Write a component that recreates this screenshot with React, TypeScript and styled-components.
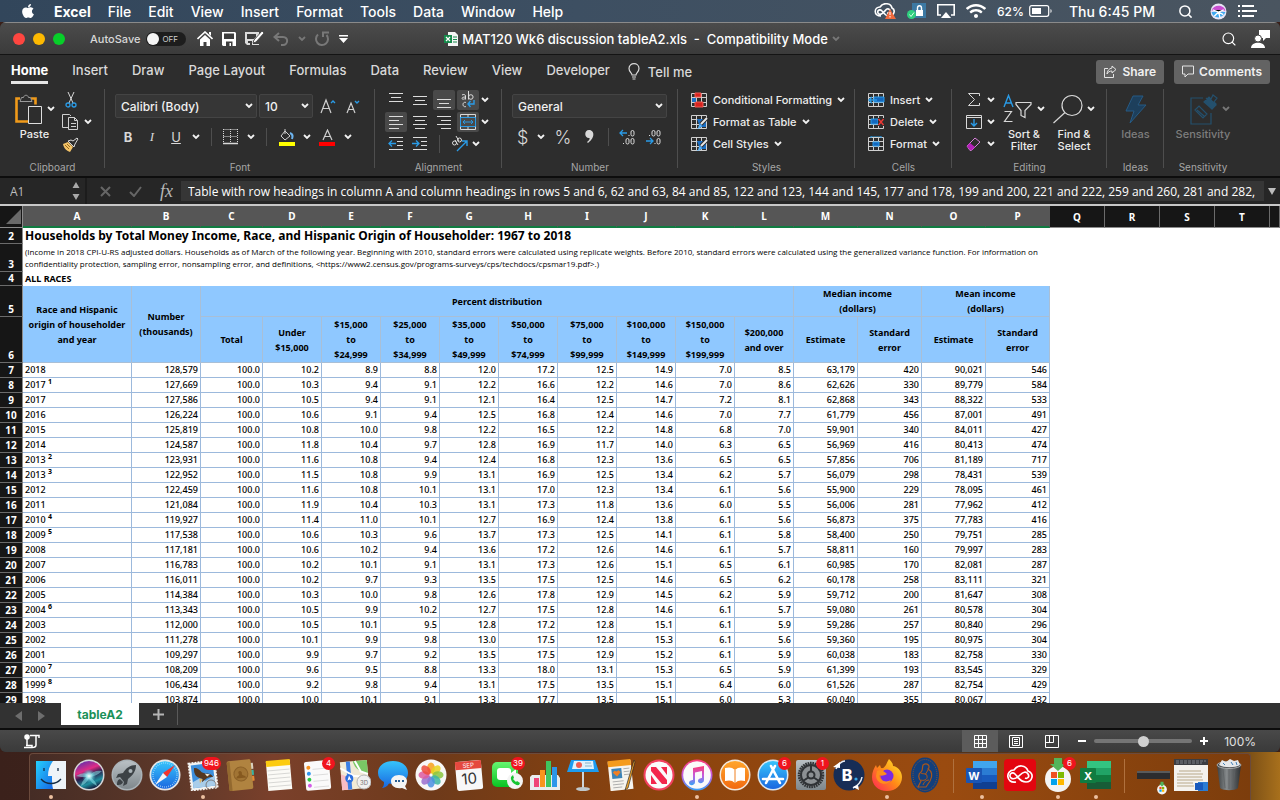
import styled, { createGlobalStyle, css } from "styled-components";
import { FaApple, FaWifi } from "react-icons/fa";
import { Search } from "lucide-react";
import type { ReactNode } from "react";

const ui = `Inter, "Liberation Sans", sans-serif`;
const cellFont = `"Noto Sans", "Open Sans", sans-serif`;
const lightCellFont = `"Open Sans", "Noto Sans", sans-serif`;

const menus = ["File", "Edit", "View", "Insert", "Format", "Tools", "Data", "Window", "Help"];
const tabs = ["Home", "Insert", "Draw", "Page Layout", "Formulas", "Data", "Review", "View", "Developer"];
const columns = "ABCDEFGHIJKLMNOPQRST".split("");

const bands = [
  ["$15,000", "$24,999"],
  ["$25,000", "$34,999"],
  ["$35,000", "$49,999"],
  ["$50,000", "$74,999"],
  ["$75,000", "$99,999"],
  ["$100,000", "$149,999"],
  ["$150,000", "$199,999"],
];

// year, footnote, number, total, ten bands, median + error, mean + error
const data = `2018||128,579|100.0|10.2|8.9|8.8|12.0|17.2|12.5|14.9|7.0|8.5|63,179|420|90,021|546
2017|1|127,669|100.0|10.3|9.4|9.1|12.2|16.6|12.2|14.6|7.0|8.6|62,626|330|89,779|584
2017||127,586|100.0|10.5|9.4|9.1|12.1|16.4|12.5|14.7|7.2|8.1|62,868|343|88,322|533
2016||126,224|100.0|10.6|9.1|9.4|12.5|16.8|12.4|14.6|7.0|7.7|61,779|456|87,001|491
2015||125,819|100.0|10.8|10.0|9.8|12.2|16.5|12.2|14.8|6.8|7.0|59,901|340|84,011|427
2014||124,587|100.0|11.8|10.4|9.7|12.8|16.9|11.7|14.0|6.3|6.5|56,969|416|80,413|474
2013|2|123,931|100.0|11.6|10.8|9.4|12.4|16.8|12.3|13.6|6.5|6.5|57,856|706|81,189|717
2013|3|122,952|100.0|11.5|10.8|9.9|13.1|16.9|12.5|13.4|6.2|5.7|56,079|298|78,431|539
2012||122,459|100.0|11.6|10.8|10.1|13.1|17.0|12.3|13.4|6.1|5.6|55,900|229|78,095|461
2011||121,084|100.0|11.9|10.4|10.3|13.1|17.3|11.8|13.6|6.0|5.5|56,006|281|77,962|412
2010|4|119,927|100.0|11.4|11.0|10.1|12.7|16.9|12.4|13.8|6.1|5.6|56,873|375|77,783|416
2009|5|117,538|100.0|10.6|10.3|9.6|13.7|17.3|12.5|14.1|6.1|5.8|58,400|250|79,751|285
2008||117,181|100.0|10.6|10.2|9.4|13.6|17.2|12.6|14.6|6.1|5.7|58,811|160|79,997|283
2007||116,783|100.0|10.2|10.1|9.1|13.1|17.3|12.6|15.1|6.5|6.1|60,985|170|82,081|287
2006||116,011|100.0|10.2|9.7|9.3|13.5|17.5|12.5|14.6|6.5|6.2|60,178|258|83,111|321
2005||114,384|100.0|10.3|10.0|9.8|12.6|17.8|12.9|14.5|6.2|5.9|59,712|200|81,647|308
2004|6|113,343|100.0|10.5|9.9|10.2|12.7|17.5|12.8|14.6|6.1|5.7|59,080|261|80,578|304
2003||112,000|100.0|10.5|10.1|9.5|12.8|17.2|12.8|15.1|6.1|5.9|59,286|257|80,840|296
2002||111,278|100.0|10.1|9.9|9.8|13.0|17.5|12.8|15.3|6.1|5.6|59,360|195|80,975|304
2001||109,297|100.0|9.9|9.7|9.2|13.5|17.5|12.9|15.2|6.1|5.9|60,038|183|82,758|330
2000|7|108,209|100.0|9.6|9.5|8.8|13.3|18.0|13.1|15.3|6.5|5.9|61,399|193|83,545|329
1999|8|106,434|100.0|9.2|9.8|9.4|13.1|17.5|13.5|15.1|6.4|6.0|61,526|287|82,754|429
1998||103,874|100.0|10.0|10.1|9.1|13.3|17.7|13.5|15.1|6.0|5.3|60,040|355|80,067|432`
  .split("\n")
  .map((line) => line.split("|"));

const Chevron = ({ dim }: { dim?: boolean }) => (
  <svg width="8" height="6" viewBox="0 0 8 6" fill="none" stroke={dim ? "#777" : "#f2f2f2"} strokeWidth="1.8">
    <path d="M1 1l3 3 3-3" />
  </svg>
);

type AlignKind = "top" | "middle" | "bottom" | "left" | "center" | "right";
const alignLines: Record<AlignKind, [number, number, number][]> = {
  top: [[1, 1, 14], [3, 5, 10], [1, 9, 14]],
  middle: [[1, 4, 14], [3, 8, 10], [1, 12, 14]],
  bottom: [[1, 7, 14], [3, 11, 10], [1, 15, 14]],
  left: [[1, 2, 14], [1, 6, 10], [1, 10, 14], [1, 14, 10]],
  center: [[1, 2, 14], [3, 6, 10], [1, 10, 14], [3, 14, 10]],
  right: [[1, 2, 14], [5, 6, 10], [1, 10, 14], [5, 14, 10]],
};
const AlignIcon = ({ kind }: { kind: AlignKind }) => (
  <svg width="16" height="17" viewBox="0 0 16 17" fill="#dcdcdc">
    {alignLines[kind].map(([x, y, w]) => (
      <rect key={y} x={x} y={y} width={w} height="1" />
    ))}
  </svg>
);

const IndentIcon = ({ out }: { out?: boolean }) => (
  <svg width="16" height="16" viewBox="0 0 16 16" fill="none" stroke="#dcdcdc">
    <path d="M1 1.5h14M9 5.5h6M9 9.5h6M1 13.5h14" />
    <path d={out ? "M8 7.5H1M4 4.5l-3 3 3 3" : "M0 7.5h7M4 4.5l3 3-3 3"} stroke="#2a9be6" strokeWidth="1.3" />
  </svg>
);

const GridIcon = ({ children }: { children?: ReactNode }) => (
  <svg width="17" height="16" viewBox="0 0 17 16" fill="none" stroke="#d0d0d0">
    <path d="M.5 1.5h15v13H.5zM.5 5.5h15M.5 10.5h15M5.5 1.5v13M10.5 1.5v13" />
    {children}
  </svg>
);

const BrushOver = () => (
  <>
    <path d="M6 5h9v8H9z" fill="#1b6fc4" stroke="none" />
    <path d="M16 4l-6 6" stroke="#2e2e2e" strokeWidth="4" />
    <path d="M16 4l-6 6" stroke="#e8e8e8" strokeWidth="2" />
    <path d="M5 15c3 0 2-4 4-5l2 2c-1 2-3 3-6 3z" fill="#5cb3f5" stroke="none" />
  </>
);

const PasteIcon = () => (
  <svg width="29" height="31" viewBox="0 0 29 31" fill="none">
    <path d="M6 4.500H2.500v23H14M17 4.500h4.500v6" stroke="#f09a1a" strokeWidth="2.600" />
    <path d="M7.500 3.500h2c.5-3 4.500-3 5 0h2l1.500 4H6z" stroke="#9a9a9a" fill="#2d2d2d" />
    <path d="M14.500 12.500h13v17h-13z" stroke="#dedede" fill="#2d2d2d" />
  </svg>
);

const CutIcon = () => (
  <svg width="12" height="16" viewBox="0 0 12 16" fill="none">
    <path d="M3 0l5 11M9 0L4 11" stroke="#d8d8d8" />
    <circle cx="3" cy="13" r="2" stroke="#2a9be6" strokeWidth="1.300" />
    <circle cx="9" cy="13" r="2" stroke="#2a9be6" strokeWidth="1.300" />
  </svg>
);

const CopyIcon = () => (
  <svg width="17" height="16" viewBox="0 0 17 16" fill="none" stroke="#d0d0d0">
    <path d="M6 13.500H.5V.5h7L9 2" />
    <path d="M6.500 3.500h6l3 3v9h-9zM12.500 3.500v3h3M9 9.500h5M9 12.500h5" />
  </svg>
);

const PainterIcon = () => (
  <svg width="17" height="15" viewBox="0 0 17 15">
    <path d="M1 7l5-2 5 5-3 5C5 14 2 12 1 7z" fill="#f3c267" />
    <path d="M3 8l4 4M5 7l3 3" stroke="#96691b" />
    <path d="M6 4l6 6 1-3 3-5-1-1-4 3-2-1z" fill="#2d2d2d" stroke="#d8d8d8" />
  </svg>
);

const FontSizeIcon = ({ down }: { down?: boolean }) => (
  <svg width="17" height="16" viewBox="0 0 17 16" fill="none">
    <path d={down ? "M1 15L5 5l4 10M2.500 11.500h5" : "M1 15L6 2l5 13M3 10.500h6"} stroke="#cfcfcf" strokeWidth="1.200" />
    <path d={down ? "M9 3l2 2 2-2" : "M11 5l2-2 2 2"} stroke="#2a9be6" strokeWidth="1.400" />
  </svg>
);

const BordersIcon = () => (
  <svg width="16" height="16" viewBox="0 0 16 16" stroke="#d8d8d8" fill="none">
    <path d="M.5.5h14M.5 7.500h14M.5 0v14M7.500 0v14M14.500 0v14" strokeDasharray="1 1" />
    <path d="M0 14.500h15" strokeWidth="1.400" />
  </svg>
);

const FillIcon = () => (
  <svg width="17" height="17" viewBox="0 0 17 17" fill="none">
    <path d="M7 2l5 5-5 4-4-4zM7 0v5" stroke="#cfcfcf" />
    <path d="M12 4c3 1 3 3 2 6" stroke="#6db4ef" strokeWidth="2" />
    <path d="M1 13h16v4H1z" fill="#ff0" />
  </svg>
);

const FontColorIcon = () => (
  <svg width="17" height="17" viewBox="0 0 17 17" fill="none">
    <path d="M4 11L8.500 1 13 11M5.500 7.500h6" stroke="#cfcfcf" strokeWidth="1.200" />
    <path d="M0 13h16v4H0z" fill="#f00" />
  </svg>
);

const WrapIcon = () => (
  <svg width="16" height="18" viewBox="0 0 16 18" fill="none" stroke="#dcdcdc">
    <path d="M2 4c1.500-1 3.500-.5 3.500 1v3.500M5.500 6C3 6 2 6.500 2 7.500s2.500 1 3.500-.5" />
    <path d="M8.500 0v8.500" />
    <circle cx="10.800" cy="6" r="2.300" />
    <path d="M6 11.500c-4-1.500-4 5.500 0 4" />
    <path d="M14 9v4H8M10.500 10L8 13l2.500 3" stroke="#2a9be6" strokeWidth="1.400" />
  </svg>
);

const MergeIcon = () => (
  <svg width="16" height="16" viewBox="0 0 16 16" fill="none" stroke="#d8d8d8">
    <path d="M.5.5h15v15H.5zM8 0v4M8 12v4" />
    <path d="M.5 3.500h15v9H.5z" stroke="#2a9be6" />
    <path d="M3 8h10M5 6L3 8l2 2M11 6l2 2-2 2" stroke="#2a9be6" />
  </svg>
);

const OrientationIcon = () => (
  <svg width="17" height="16" viewBox="0 0 17 16" fill="none" stroke="#dcdcdc">
    <circle cx="3.500" cy="7" r="2" />
    <circle cx="8.500" cy="4" r="2" />
    <path d="M4 4l3 5M5 0l3 5" />
    <path d="M6 15L16 5M11 5h5v5" stroke="#2a9be6" strokeWidth="1.400" />
  </svg>
);

const DecimalIcon = ({ more }: { more?: boolean }) => (
  <svg width="17" height="17" viewBox="0 0 17 17" fill="none" stroke="#dcdcdc">
    <rect x="12" y="1.500" width="3" height="5.500" rx="1.500" />
    <rect x="12" y="9.500" width="3" height="5.500" rx="1.500" />
    {more ? (
      <>
        <path d="M8 4H1M4 1L1 4l3 3" stroke="#2a9be6" strokeWidth="1.300" />
        <rect x="7" y="9.500" width="3" height="5.500" rx="1.500" />
        <path d="M9.500 6.500h1M4 14.500h1" />
      </>
    ) : (
      <>
        <path d="M1 12h7M5 9l3 3-3 3" stroke="#2a9be6" strokeWidth="1.300" />
        <rect x="7" y="1.500" width="3" height="5.500" rx="1.500" />
        <path d="M4 6.500h1M9.500 14.500h1" />
      </>
    )}
  </svg>
);

const SumIcon = () => (
  <svg width="14" height="14" viewBox="0 0 14 14" fill="none" stroke="#d8d8d8">
    <path d="M12.500 3V.5h-11l6 6-6 6h11V10" />
  </svg>
);
const FillDownIcon = () => (
  <svg width="16" height="14" viewBox="0 0 16 14" fill="none" stroke="#d8d8d8">
    <path d="M.5.5h15v13H.5zM.5 2.500h15" />
    <path d="M8 4v7M5 8l3 3 3-3" stroke="#2a9be6" strokeWidth="1.400" />
  </svg>
);
const EraserIcon = () => (
  <svg width="16" height="14" viewBox="0 0 16 14" fill="none">
    <path d="M1 9l8-8 5 4-8 8-2 .5z" stroke="#d77fdb" />
    <path d="M1 9l3-3 5 4-3 3H4z" fill="#b31fb8" />
  </svg>
);
const SortIcon = () => (
  <svg width="30" height="30" viewBox="0 0 30 30" fill="none" strokeWidth="1.200">
    <path d="M1 13L5.500 1.500 10 13M2.500 9h6" stroke="#2a9be6" strokeWidth="1.400" />
    <path d="M1.500 17.500h7l-7 10h8" stroke="#d8d8d8" />
    <path d="M13 8.500h15v2l-6 6v7l-4-2v-5l-5-6z" stroke="#d8d8d8" />
  </svg>
);
const FindIcon = () => (
  <svg width="30" height="30" viewBox="0 0 30 30" fill="none" stroke="#d8d8d8" strokeWidth="1.200">
    <circle cx="19" cy="11.500" r="10" />
    <path d="M12 18.500L.5 29" />
  </svg>
);
const BoltIcon = () => (
  <svg width="23" height="29" viewBox="0 0 23 29">
    <path d="M9 1h10l-5 9h8L6 28l4-12H2z" fill="#1d3f5c" stroke="#275b84" />
  </svg>
);
const SensitivityIcon = () => (
  <svg width="28" height="31" viewBox="0 0 28 31" fill="none" stroke="#24506d" strokeWidth="1.200">
    <path d="M13 4H1v26h20V19" />
    <path d="M16 4l8 8M5 16l4-4 8 8-4 4zM7 16l7 6M14 8l5-5 2 2 2-4 4 3-3 4 2 2-4 5z" />
    <path d="M15 8l4-4 7 7-4 4z" fill="#24506d" />
  </svg>
);

/* ---------- dock artwork, 32 x 32 each ---------- */

const Art = ({ children }: { children: ReactNode }) => (
  <svg width="32" height="32" viewBox="0 0 32 32">
    {children}
  </svg>
);

const DockDefs = () => (
  <HiddenSvg width="0" height="0">
    <defs>
      <linearGradient id="siri" x1=".2" x2=".6" y2="1">
        <stop offset="0" stopColor="#5a2fae" />
        <stop offset=".35" stopColor="#e02c86" />
        <stop offset=".55" stopColor="#2a1d4a" />
        <stop offset=".8" stopColor="#1f8f9e" />
        <stop offset="1" stopColor="#141b3c" />
      </linearGradient>
      <radialGradient id="glow">
        <stop offset="0" stopColor="#fff" />
        <stop offset=".4" stopColor="#9ff1f5" stopOpacity=".8" />
        <stop offset="1" stopColor="#35c3d5" stopOpacity="0" />
      </radialGradient>
      <linearGradient id="safari" x2="0" y2="1">
        <stop offset="0" stopColor="#36c4fb" />
        <stop offset="1" stopColor="#1967e0" />
      </linearGradient>
      <linearGradient id="steel" x2="0" y2="1">
        <stop offset="0" stopColor="#b9c0c4" />
        <stop offset="1" stopColor="#7f888d" />
      </linearGradient>
      <linearGradient id="green" x2="0" y2="1">
        <stop offset="0" stopColor="#66f570" />
        <stop offset="1" stopColor="#09c322" />
      </linearGradient>
      <linearGradient id="orange" x2="0" y2="1">
        <stop offset="0" stopColor="#ffa52b" />
        <stop offset="1" stopColor="#f26a10" />
      </linearGradient>
      <linearGradient id="note" x2="0" y2="1">
        <stop offset="0" stopColor="#fb3a72" />
        <stop offset=".5" stopColor="#c45be0" />
        <stop offset="1" stopColor="#3aa2f5" />
      </linearGradient>
      <linearGradient id="fox" x1="1" x2="0" y2="1">
        <stop offset="0" stopColor="#fff02e" />
        <stop offset=".5" stopColor="#ff8a17" />
        <stop offset="1" stopColor="#ff1f5b" />
      </linearGradient>
      <linearGradient id="bin" x2="1">
        <stop offset="0" stopColor="#3c4042" />
        <stop offset=".4" stopColor="#85898b" />
        <stop offset="1" stopColor="#2e3133" />
      </linearGradient>
      <linearGradient id="finder" x1="0" x2="1" y2="1">
        <stop offset="0" stopColor="#25d0fd" />
        <stop offset="1" stopColor="#1667e6" />
      </linearGradient>
    </defs>
  </HiddenSvg>
);

const Finder = () => (
  <Art>
    <path d="M1 2h30v28H1z" fill="#eef3f8" />
    <path d="M1 2h17c-3 4-5 9-5 15h4c0 5 0 9 1 13H1z" fill="url(#finder)" />
    <path d="M9 9v3M23 9v3M6 20c5 6 15 6 20 0" stroke="#142c46" strokeWidth="1.300" fill="none" />
  </Art>
);
const Siri = () => (
  <Art>
    <circle cx="16" cy="16" r="15.500" fill="#d5d5d8" />
    <circle cx="16" cy="16" r="14" fill="url(#siri)" />
    <path d="M3 17c8-4 10-3 13 0 4-5 8-6 13-5-4 4-8 5-12 6 4 3 6 5 7 9-4-2-7-5-8-8-2 4-4 6-8 8 1-5 3-7 6-9-4 0-8 0-11-1z" fill="#8de4ea" opacity=".55" />
    <circle cx="16" cy="17" r="7" fill="url(#glow)" />
  </Art>
);
const Launchpad = () => (
  <Art>
    <circle cx="16" cy="16" r="15.500" fill="#aab3b8" />
    <circle cx="16" cy="16" r="14" fill="url(#steel)" />
    <path d="M25 6c-6 0-10 3-13 8l-5 1-2 4 4-1 4 5-1 4 4-2 1-5c5-4 8-8 8-14z" fill="#3c4246" />
    <circle cx="19.500" cy="12" r="2" fill="#aab3b8" />
    <path d="M9 20c-3 1-3 4-3 6 2 0 5 0 6-3" fill="#3c4246" />
  </Art>
);
const Safari = () => (
  <Art>
    <circle cx="16" cy="16" r="15.500" fill="#e6e6e6" />
    <circle cx="16" cy="16" r="13.800" fill="url(#safari)" />
    <circle cx="16" cy="16" r="12" fill="none" stroke="#bfe6ff" strokeDasharray=".6 1.500" strokeWidth="1.500" />
    <path d="M26 6L18 18l-4-4z" fill="#f2342e" />
    <path d="M6 26l8-12 4 4z" fill="#f5f5f5" />
  </Art>
);
const Mail = () => (
  <Art>
    <g transform="rotate(-7 16 16)">
      <rect x="3" y="3" width="26" height="27" fill="#f4f4f2" stroke="#f4f4f2" strokeDasharray="2 1" strokeWidth="2" />
      <rect x="5" y="5" width="22" height="23" fill="#3d8fdc" />
      <path d="M5 22l7-3 6 3 9-4v10H5z" fill="#a8cdea" />
      <path d="M8 8c3 0 5 2 7 5l4 2c3 0 5 1 7 4-3 0-5 0-7 1l-5 3 1-3-4-2c-3-2-4-6-3-10z" fill="#54371f" />
      <path d="M18 15l5 1-3 2z" fill="#f3ead6" />
      <path d="M12 19l3 1-3 4z" fill="#e2b25c" />
    </g>
    <circle cx="24" cy="26" r="5" fill="none" stroke="#5b4638" strokeWidth="1" opacity=".6" />
  </Art>
);
const Contacts = () => (
  <Art>
    <g transform="rotate(-6 16 16)">
      <path d="M26 5h3v6h-3z" fill="#d9d2c0" />
      <path d="M26 12h3v5h-3z" fill="#38b6a5" />
      <path d="M26 18h3v5h-3z" fill="#e78b35" />
      <rect x="3" y="1" width="24" height="30" rx="2" fill="#b08340" />
      <path d="M3 2h3v29H3z" fill="#93692f" />
      <circle cx="16" cy="15" r="7" fill="#a17434" stroke="#8c6128" />
      <path d="M11 19c1-3 3-2 3-4-2-4 4-4 3 0 0 2 3 1 4 4z" fill="#86591f" />
    </g>
  </Art>
);
const Notes = () => (
  <Art>
    <g transform="rotate(-5 16 16)">
      <rect x="4" y="2" width="24" height="29" fill="#fbfaf6" />
      <rect x="4" y="1" width="24" height="6" fill="#fccb10" />
      <path d="M5 11h22M5 15h22M5 19h22M5 23h22M5 27h22" stroke="#d0d0cd" strokeWidth=".8" />
    </g>
  </Art>
);
const Reminders = () => (
  <Art>
    <g transform="rotate(-5 16 16)">
      <rect x="4" y="2" width="25" height="29" rx="2" fill="#fafafa" />
      {["#f79321", "#2f95f1", "#2ccb45", "#d35ce8"].map((c, i) => (
        <circle key={c} cx="8" cy={8 + i * 6} r="2" fill={c} />
      ))}
      <path d="M12 10h15M12 16h15M12 22h15M12 28h15" stroke="#d6d6d6" strokeWidth=".8" />
    </g>
  </Art>
);
const Maps = () => (
  <Art>
    <g transform="rotate(-5 16 16)">
      <rect x="2" y="2" width="27" height="28" fill="#f1ead6" />
      <path d="M15 2h14v14c-8-2-13-7-14-14z" fill="#7ac765" />
      <path d="M2 14l10 5v11H2z" fill="#f8bdc4" />
      <path d="M10 2v28" stroke="#3a7fe5" strokeWidth="4" />
      <path d="M2 8l13 9 14 2M17 2l5 11 7 3" stroke="#fff" strokeWidth="2" fill="none" />
      <circle cx="10" cy="19" r="4" fill="#2a6fe0" />
      <path d="M10 16l2 5-2-1-2 1z" fill="#fff" />
    </g>
    <circle cx="25" cy="23" r="7" fill="#f0f0f0" stroke="#b5b5b5" />
    <text x="25" y="26" fontSize="6" textAnchor="middle" fill="#777" fontFamily="Inter">3D</text>
  </Art>
);
const Messages = () => (
  <Art>
    <path d="M16 2c9 0 15 5 15 12s-6 11-15 11l-4-.5C10 28 7 29 5 29c2-2 2-4 2-6-4-2-6-5-6-9C1 7 7 2 16 2z" fill="url(#safari)" />
    <path d="M22 16c5 0 8 3 8 6s-2 5-2 5l2 4-5-2c-7 1-11-2-11-7 0-3 3-6 8-6z" fill="#f5f5f5" />
    <path d="M18 22h2M21 22h2M25 22h2" stroke="#2b5f93" strokeWidth="2" />
  </Art>
);
const Photos = () => (
  <Art>
    <circle cx="16" cy="16" r="15.500" fill="#f7f7f7" />
    {["#f7a11b", "#e8d21c", "#8ac53f", "#3cb6a0", "#4a8fe0", "#9a6fd0", "#dd5aa0", "#ef4a3a"].map((c, i) => (
      <ellipse key={c} cx="16" cy="9" rx="3.800" ry="5.500" fill={c} opacity=".85" transform={`rotate(${i * 45} 16 16)`} />
    ))}
  </Art>
);
const Calendar = () => (
  <Art>
    <g transform="rotate(-5 16 16)">
      <rect x="3" y="2" width="26" height="29" rx="2" fill="#f8f8f8" />
      <rect x="3" y="2" width="26" height="8" fill="#e5483e" />
      <text x="16" y="8.500" fontSize="6" textAnchor="middle" fill="#fff" fontFamily="Inter">SEP</text>
      <text x="16" y="25" fontSize="15" textAnchor="middle" fill="#333" fontFamily="Inter">10</text>
    </g>
  </Art>
);
const FaceTime = () => (
  <Art>
    <rect x="1" y="3" width="26" height="25" rx="5" fill="url(#green)" />
    <rect x="6" y="9" width="14" height="12" rx="3" fill="#fff" />
    <path d="M20 14l5-4v10l-5-3z" fill="#fff" />
    <circle cx="24" cy="22" r="8" fill="#f4f4f4" />
    <path d="M20 18c-1 4 4 9 8 8l1-2-3-2-1 1-3-3 1-1-1-3z" fill="#16c431" />
  </Art>
);
const Numbers = () => (
  <Art>
    <path d="M1 18l2-2h26l2 3v12H1z" fill="#e9ecee" />
    <path d="M5 19h5v9H5z" fill="#ef4577" />
    <path d="M11 11h5v17h-5z" fill="#f8951d" />
    <path d="M17 2h5v26h-5z" fill="#3fc55e" />
    <path d="M23 8h5v20h-5z" fill="#2c96ea" />
  </Art>
);
const Keynote = () => (
  <Art>
    <path d="M4 1h24l4 12H0z" fill="#1d9cf0" />
    <path d="M7 2h19l1 8H5z" fill="#dff1fc" />
    <circle cx="12" cy="6" r="3" fill="#ef5c50" />
    <path d="M18 4h6M18 7h7" stroke="#88b3c8" />
    <path d="M15 13h2v16h-2z" fill="#cfd5d9" />
    <ellipse cx="16" cy="30" rx="7" ry="2" fill="#bfc7cb" />
  </Art>
);
const Pages = () => (
  <Art>
    <g transform="rotate(-6 16 16)">
      <rect x="4" y="2" width="23" height="29" fill="#f5f3ee" />
      <rect x="4" y="1" width="23" height="6" fill="#f59b1c" />
      <rect x="7" y="9" width="10" height="10" fill="#3b83b7" />
      <path d="M12 17l-4-4 2-2 2 1 2-1 2 2z" fill="#f07f24" />
      <path d="M19 10h6M19 13h6M19 16h5M7 22h11M7 25h11M7 28h9" stroke="#aaa" strokeWidth=".9" />
    </g>
    <path d="M29 1l-8 27-1 3 3-2 7-26z" fill="#f2a52b" stroke="#2d2a26" strokeWidth=".7" />
  </Art>
);
const News = () => (
  <Art>
    <circle cx="16" cy="16" r="15.500" fill="#f3405f" />
    <circle cx="16" cy="16" r="13.500" fill="#fbfbfb" />
    <path d="M8 8h5l11 13v4h-5L8 12z" fill="#f3274d" />
    <path d="M18 8h6v8zM8 16l6 9H8z" fill="#f3274d" />
  </Art>
);
const Music = () => (
  <Art>
    <circle cx="16" cy="16" r="15.500" fill="url(#note)" />
    <circle cx="16" cy="16" r="13.800" fill="#fafafa" />
    <path d="M12 9l11-2v14c0 4-6 4-6 1s4-3 4-3v-7l-7 1.500V23c0 4-6 4-6 1s4-3 4-3z" fill="url(#note)" />
  </Art>
);
const Books = () => (
  <Art>
    <circle cx="16" cy="16" r="15.500" fill="#f2e9df" />
    <circle cx="16" cy="16" r="14" fill="url(#orange)" />
    <path d="M6 9c4-1 7-1 10 2 3-3 6-3 10-2v13c-4-1-7-1-10 2-3-3-6-3-10-2z" fill="#fff" />
    <path d="M16 11v13" stroke="#f08020" />
  </Art>
);
const AppStore = () => (
  <Art>
    <circle cx="16" cy="16" r="15.500" fill="#dce7f0" />
    <circle cx="16" cy="16" r="14" fill="url(#safari)" />
    <path d="M18 7L9 24M14 7l9 17M6 20h20" stroke="#fff" strokeWidth="2.600" strokeLinecap="round" />
  </Art>
);
const Settings = () => (
  <Art>
    <rect x="1" y="1" width="30" height="30" rx="2" fill="url(#steel)" />
    <circle cx="16" cy="16" r="12" fill="#8c9093" stroke="#2f3235" strokeWidth="2.500" strokeDasharray="1.600 .8" />
    <circle cx="16" cy="16" r="10" fill="none" stroke="#2f3235" strokeWidth="2" />
    <circle cx="16" cy="16" r="3.500" fill="none" stroke="#2f3235" strokeWidth="2" />
    <path d="M16 13V7M14 18l-6 4M18 18l6 4" stroke="#2f3235" strokeWidth="2" />
  </Art>
);
const BApp = () => (
  <Art>
    <circle cx="16" cy="16" r="15.500" fill="#172d56" />
    <path d="M3 10C5 5 9 2 12 2M29 18c-1 6-5 9-9 11" stroke="#e9eef5" strokeWidth="1.500" fill="none" />
    <path d="M0 8l7-5v6zM25 26l1 5-6-3z" fill="#fff" />
    <text x="14" y="22" fontSize="16" fontWeight="800" textAnchor="middle" fill="#fff" fontFamily="Inter">B</text>
    <circle cx="23" cy="20" r="1.600" fill="#38a7e8" />
  </Art>
);
const Firefox = () => (
  <Art>
    <path d="M18 0c3 3 4 5 4 7 4 0 9 5 9 11 0 8-6 14-15 14S1 26 1 18c0-5 2-9 4-12l1 3 3-3 1 3c4 1 5-4 8-9z" fill="url(#fox)" />
    <circle cx="16" cy="17" r="6.500" fill="#7a2be0" />
    <path d="M6 12c3-2 7 0 10 3-3 2-7 2-8 1 1 6 7 8 12 5-3 6-14 5-15-4z" fill="#ff8e1c" />
  </Art>
);
const Emblem = () => (
  <svg width="32" height="36" viewBox="0 0 32 36">
    <ellipse cx="16" cy="18" rx="14" ry="17.500" fill="#123f7c" />
    <ellipse cx="16" cy="18" rx="12" ry="15.500" fill="none" stroke="#a8561c" strokeWidth=".8" strokeDasharray="1 1" />
    <path d="M14 8c4-3 8 1 5 4 4 2 5 7 2 12l-4 6H9l3-6c-3-3-3-7 0-9 2-1 1-4 2-7z" fill="none" stroke="#a8561c" strokeWidth="1.200" />
    <path d="M12 16c3 2 5-1 6 3s-4 5-6 4M19 13l-3 5M20 23c-3 0-5 2-6 5" stroke="#a8561c" fill="none" />
  </svg>
);
const Office = ({ letter, shades }: { letter: string; shades: string[] }) => (
  <Art>
    {shades.slice(0, 4).map((c, i) => (
      <rect key={i} x="7" y={2 + i * 7} width="24" height="7" fill={c} />
    ))}
    <rect x="0" y="9" width="16" height="15" rx="1" fill={shades[4]} />
    <text x="8" y="20.500" fontSize="11" fontWeight="700" textAnchor="middle" fill="#fff" fontFamily="Inter">{letter}</text>
  </Art>
);
const CreativeCloud = () => (
  <Art>
    <rect x="0" y="0" width="32" height="32" rx="4" fill="#e3060f" />
    <path d="M12 23c-10 2-11-12-2-12 4-6 12-5 14 1 7 3 4 11-2 11-6 0-7-4-11-8-3-3-7 1-4 4 3 2 6 0 9-3 3-3 6-4 8-1s-1 5-3 4" fill="none" stroke="#fff" strokeWidth="1.700" />
  </Art>
);
const Updater = ({ small }: { small?: boolean }) => (
  <svg width={small ? 12 : 32} height={small ? 14 : 34} viewBox="0 0 32 34">
    <circle cx="16" cy="21" r="13" fill="#f4f4f4" />
    <path d="M9 14h6v6H9z" fill="#ef5022" />
    <path d="M16 14h6v6h-6z" fill="#7fb900" />
    <path d="M9 21h6v6H9z" fill="#02a3ee" />
    <path d="M16 21h6v6h-6z" fill="#feb801" />
    <path d="M12 0h8v6h4l-8 7-8-7h4z" fill="#53b45a" />
  </svg>
);
const Trash = () => (
  <Art>
    <path d="M4 6h24l-3 23c-3 3-15 3-18 0z" fill="url(#bin)" />
    <path d="M10 10l2 19M16 10v20M22 10l-2 19" stroke="#5d6163" strokeWidth=".8" />
    <ellipse cx="16" cy="6" rx="12" ry="3.500" fill="#4a4e50" stroke="#a7aaab" />
    <path d="M6 6l3-5 4 2 4-3 4 2 4-1 2 5c-5 3-16 3-21 0z" fill="#e6e8ea" />
    <path d="M10 4l2 2M18 3l2 3M23 3l1 3" stroke="#3f7fb5" />
  </Art>
);
const DocThumb = () => (
  <svg width="34" height="32" viewBox="0 0 34 32">
    <path d="M0 0h34v32H0z" fill="#f4f2ee" />
    <path d="M0 0h34v6H0z" fill="#3b3d42" />
    <path d="M2 2h30M2 4h26" stroke="#8c9097" strokeWidth=".8" strokeDasharray="3 1" />
    <path d="M5 12h22M3 15h26M3 18h25M3 21h26M3 24h16M3 27h17" stroke="#b7a888" strokeWidth="1.200" />
    <path d="M24 23h10v9H24z" fill="#2b7cd3" />
    <path d="M21 24h8v7h-8z" fill="#185abd" />
  </svg>
);
const wordShades = ["#41a5ee", "#2b7cd3", "#185abd", "#103f91", "#1a55b4"];
const excelShades = ["#33c481", "#21a366", "#107c41", "#185c37", "#107c41"];

const dockItems: { name: string; art: ReactNode; badge?: string; running?: boolean }[] = [
  { name: "Finder", art: <Finder />, running: true },
  { name: "Siri", art: <Siri /> },
  { name: "Launchpad", art: <Launchpad /> },
  { name: "Safari", art: <Safari /> },
  { name: "Mail", art: <Mail />, badge: "946", running: true },
  { name: "Contacts", art: <Contacts /> },
  { name: "Notes", art: <Notes /> },
  { name: "Reminders", art: <Reminders />, badge: "4" },
  { name: "Maps", art: <Maps /> },
  { name: "Messages", art: <Messages /> },
  { name: "Photos", art: <Photos /> },
  { name: "Calendar", art: <Calendar /> },
  { name: "FaceTime", art: <FaceTime />, badge: "39" },
  { name: "Numbers", art: <Numbers /> },
  { name: "Keynote", art: <Keynote /> },
  { name: "Pages", art: <Pages /> },
  { name: "News", art: <News /> },
  { name: "Music", art: <Music />, running: true },
  { name: "Books", art: <Books /> },
  { name: "App Store", art: <AppStore />, badge: "6" },
  { name: "System Preferences", art: <Settings />, badge: "1" },
  { name: "B", art: <BApp /> },
  { name: "Firefox", art: <Firefox />, running: true },
  { name: "Emblem", art: <Emblem /> },
];
const dockOffice: typeof dockItems = [
  { name: "Word", art: <Office letter="W" shades={wordShades} />, running: true },
  { name: "Creative Cloud", art: <CreativeCloud /> },
  { name: "AutoUpdate", art: <Updater />, badge: "6", running: true },
  { name: "Excel", art: <Office letter="X" shades={excelShades} />, running: true },
];

const DockApp = ({ item }: { item: (typeof dockItems)[number] }) => (
  <DockButton aria-label={item.name}>
    {item.art}
    {item.badge && <Badge>{item.badge}</Badge>}
    {item.running && <RunningDot />}
  </DockButton>
);

export default function App() {
  return (
    <Desktop>
      <GlobalStyle />
      <DockDefs />
      <MenuBar>
        <FaApple size={16} />
        <MenuList>
          <MenuItem $bold>Excel</MenuItem>
          {menus.map((m) => (
            <MenuItem key={m}>{m}</MenuItem>
          ))}
        </MenuList>
        <MenuExtras>
          <svg width="22" height="16" viewBox="0 0 22 16" fill="none">
            <path d="M7 13c-8 0-7-9-1-9 3-5 11-4 12 1 4 2 2 8-3 8-4 0-5-3-7-5-3-3-6 1-3 3s6-4 8-5c4-1 4 5 0 4" stroke="#fff" strokeWidth="1.600" />
            <path d="M16 6l6 10H11z" fill="#f0693c" />
            <path d="M16 9v3M16 13v1.500" stroke="#fff" />
          </svg>
          <svg width="19" height="16" viewBox="0 0 19 16">
            <path d="M5 0h14v15H5z" fill="#3d79a3" />
            <path d="M9 7h7v6H9z" fill="#fff" />
            <path d="M10.500 7V5c0-3 4-3 4 0v2" stroke="#fff" fill="none" strokeWidth="1.400" />
            <circle cx="4.500" cy="11.500" r="4.500" fill="#2fd07f" />
            <path d="M2.500 11.500l1.500 2 3-4" stroke="#d5ffe9" fill="none" />
          </svg>
          <svg width="18" height="15" viewBox="0 0 18 15" fill="none">
            <path d="M4 11H.8V.8h16.400V11H14" stroke="#fff" strokeWidth="1.600" />
            <path d="M9 8l5 6H4z" fill="#fff" />
          </svg>
          <FaWifi size={20} />
          <Battery>
            62%
            <svg width="24" height="12" viewBox="0 0 24 12" fill="none">
              <rect x=".7" y=".7" width="19" height="10.600" rx="2" stroke="#fff" strokeWidth="1.200" />
              <path d="M3 3h9v6H3z" fill="#fff" />
              <path d="M21.500 4v4c1.500-.5 1.500-3.500 0-4z" fill="#fff" />
            </svg>
          </Battery>
          <Clock>Thu 6:45 PM</Clock>
          <Search size={15} strokeWidth={2.4} />
          <MenuSiri width="17" height="17" viewBox="0 0 32 32">
            <circle cx="16" cy="16" r="15" fill="#e7e4f5" />
            <path d="M3 14C6 2 26 2 29 14l-13 3z" fill="#c94ed2" />
            <path d="M3 17c2 12 20 15 26 0l-13-1z" fill="#3fa9f0" />
            <path d="M5 13l11 4 10-4M16 17l3 11M16 17L8 25M16 17l9 5" stroke="#fff" strokeWidth="2.500" />
          </MenuSiri>
          <svg width="19" height="12" viewBox="0 0 19 12" stroke="#fff" strokeWidth="2">
            <path d="M0 1h2M0 6h2M0 11h2M4 1h12M4 6h15M4 11h12" />
          </svg>
        </MenuExtras>
      </MenuBar>

      <Window>
        <TitleBar>
          <Quick>
            <Lights>
              <Light aria-label="Close" $color="#fe4640" />
              <Light aria-label="Minimise" $color="#fdb901" />
              <Light aria-label="Zoom" $color="#07cf29" />
            </Lights>
            <AutoSave>
              AutoSave
              <Toggle aria-label="AutoSave">OFF</Toggle>
            </AutoSave>
            <IconButton aria-label="Home">
              <svg width="16" height="15" viewBox="0 0 16 15" fill="none">
                <path d="M.5 8L8 1l7.500 7" stroke="#fff" strokeWidth="1.600" />
                <path d="M3 8.500L8 4l5 4.500V15h-3.500v-4h-3v4H3zM12 1h2v4l-2-2z" fill="#fff" />
              </svg>
            </IconButton>
            <IconButton aria-label="Save">
              <svg width="14" height="14" viewBox="0 0 14 14">
                <path d="M0 0h13l1 1v13H1l-1-1z" fill="#fff" />
                <path d="M2 1.500h10V7H2zM4 9.500h6.500V14H9v-3H7.500v3H4z" fill="#3d3d3d" />
              </svg>
            </IconButton>
            <IconButton aria-label="Save a copy">
              <svg width="19" height="15" viewBox="0 0 19 15">
                <path d="M0 1h14v3l-6 6v3h6v1H2l-2-2z" fill="#dcdcdc" />
                <path d="M2 3h9v3L9 8H2zM3 10h4v4H5v-2H3z" fill="#3d3d3d" />
                <path d="M17 0l2 2-8 9-3 1 1-3z" fill="#fff" stroke="#3d3d3d" strokeWidth=".8" />
              </svg>
            </IconButton>
            <IconButton aria-label="Undo">
              <svg width="16" height="14" viewBox="0 0 16 14" fill="none" stroke="#787878" strokeWidth="2">
                <path d="M6 1L1.500 5 6 9M2 5h8c6 0 5 8 0 8H8" />
              </svg>
            </IconButton>
            <Chevron dim />
            <IconButton aria-label="Redo">
              <svg width="15" height="15" viewBox="0 0 15 15" fill="none" stroke="#787878" strokeWidth="2">
                <path d="M3 3.500a6 6 0 1 0 8.500.5M8 6V1.500h6" />
              </svg>
            </IconButton>
            <IconButton aria-label="Customise toolbar">
              <svg width="9" height="8" viewBox="0 0 9 8" fill="#fff">
                <path d="M0 0h9v1.500H0zM0 3h9L4.500 8z" />
              </svg>
            </IconButton>
          </Quick>
          <DocTitle>
            <svg width="14" height="14" viewBox="0 0 14 14">
              <path d="M4 0h7l3 3v11H4z" fill="#f5f5f5" />
              <path d="M0 3h8v8H0z" fill="#178a4c" />
              <path d="M2 5l4 4M6 5L2 9" stroke="#fff" strokeWidth="1.200" />
              <path d="M9 5h4M9 7.500h4M9 10h4" stroke="#178a4c" />
            </svg>
            <span>MAT120 Wk6 discussion tableA2.xls&nbsp; -&nbsp; Compatibility Mode</span>
            <Chevron dim />
          </DocTitle>
          <TitleTools>
            <Search size={16} strokeWidth={1.700} />
            <svg width="20" height="19" viewBox="0 0 20 19" fill="#fff">
              <path d="M8 1h11v8h-4l-3 3V9H8z" />
              <circle cx="7" cy="9.500" r="3.500" stroke="#444" />
              <path d="M0 19c0-7 14-7 14 0z" />
            </svg>
          </TitleTools>
        </TitleBar>

        <TabRow>
          {tabs.map((t, i) => (
            <RibbonTab key={t} $active={i === 0}>
              {t}
            </RibbonTab>
          ))}
          <TellMe>
            <svg width="12" height="17" viewBox="0 0 12 17" fill="none" stroke="#dcdcdc" strokeWidth="1.200">
              <path d="M4 12c0-2-3-3-3-6.500C1-1 11-1 11 5.500 11 9 8 10 8 12zM4 14h4M4.500 16h3" />
            </svg>
            Tell me
          </TellMe>
          <TabActions>
            <GreyButton>
              <svg width="13" height="13" viewBox="0 0 13 13" fill="none" stroke="#e4e4e4">
                <path d="M4 3.500H.5v9h9V9" />
                <path d="M8 1l4 3.500L8 8V6C5.500 6 4 7 3 9c0-3 2-5.500 5-6z" />
              </svg>
              Share
            </GreyButton>
            <GreyButton>
              <svg width="12" height="13" viewBox="0 0 12 13" fill="none" stroke="#e4e4e4">
                <path d="M.5 1h11v8H6l-3 3V9H.5z" />
              </svg>
              Comments
            </GreyButton>
          </TabActions>
        </TabRow>

        <Ribbon>
          <Group $w={105}>
            <GroupBody $gap={7}>
              <BigColumn>
                <BigIcon>
                  <PasteIcon />
                  <Chevron />
                </BigIcon>
                <BigLabel>Paste</BigLabel>
              </BigColumn>
              <Stack>
                <ToolRow><IconButton aria-label="Cut" $w={17}><CutIcon /></IconButton></ToolRow>
                <ToolRow><IconButton aria-label="Copy" $w={17}><CopyIcon /></IconButton><Chevron /></ToolRow>
                <ToolRow><IconButton aria-label="Format painter" $w={17}><PainterIcon /></IconButton></ToolRow>
              </Stack>
            </GroupBody>
            <GroupLabel>Clipboard</GroupLabel>
          </Group>

          <Group $w={270}>
            <Lines>
              <ToolRow $gap={2}>
                <SelectWrap $w={142}>
                  <Picker aria-label="Font name"><option>Calibri (Body)</option></Picker>
                  <Chevron />
                </SelectWrap>
                <SelectWrap $w={54}>
                  <Picker aria-label="Font size"><option>10</option></Picker>
                  <Chevron />
                </SelectWrap>
                <SizeButtons>
                  <IconButton aria-label="Grow font"><FontSizeIcon /></IconButton>
                  <IconButton aria-label="Shrink font"><FontSizeIcon down /></IconButton>
                </SizeButtons>
              </ToolRow>
              <ToolRow $gap={8} $inset>
                <Letter $bold>B</Letter>
                <Letter $italic>I</Letter>
                <Letter $underline>U</Letter>
                <Chevron />
                <Rule $space={3} />
                <IconButton aria-label="Borders"><BordersIcon /></IconButton>
                <Chevron />
                <Rule $space={3} />
                <IconButton aria-label="Fill colour"><FillIcon /></IconButton>
                <Chevron />
                <IconButton aria-label="Font colour"><FontColorIcon /></IconButton>
                <Chevron />
              </ToolRow>
            </Lines>
            <GroupLabel>Font</GroupLabel>
          </Group>

          <Group $w={127}>
            <Stack>
              <ToolRow $gap={2}>
                <AlignButton aria-label="Top"><AlignIcon kind="top" /></AlignButton>
                <AlignButton aria-label="Middle"><AlignIcon kind="middle" /></AlignButton>
                <AlignButton aria-label="Bottom" $on><AlignIcon kind="bottom" /></AlignButton>
                <AlignButton aria-label="Wrap" $on><WrapIcon /></AlignButton>
                <Chevron />
              </ToolRow>
              <ToolRow $gap={2}>
                <AlignButton aria-label="Left" $on><AlignIcon kind="left" /></AlignButton>
                <AlignButton aria-label="Centre"><AlignIcon kind="center" /></AlignButton>
                <AlignButton aria-label="Right"><AlignIcon kind="right" /></AlignButton>
                <AlignButton aria-label="Merge" $on><MergeIcon /></AlignButton>
                <Chevron />
              </ToolRow>
              <ToolRow $gap={2}>
                <AlignButton aria-label="Decrease indent"><IndentIcon out /></AlignButton>
                <AlignButton aria-label="Increase indent"><IndentIcon /></AlignButton>
                <Rule $space={6} />
                <AlignButton aria-label="Orientation"><OrientationIcon /></AlignButton>
                <Chevron />
              </ToolRow>
            </Stack>
            <GroupLabel>Alignment</GroupLabel>
          </Group>

          <Group $w={176}>
            <Lines>
              <ToolRow>
                <SelectWrap $w={155}>
                  <Picker aria-label="Number format"><option>General</option></Picker>
                  <Chevron />
                </SelectWrap>
              </ToolRow>
              <ToolRow $gap={9} $inset>
                <Symbol>$</Symbol>
                <Chevron />
                <Symbol>%</Symbol>
                <IconButton aria-label="Comma style">
                  <svg width="18" height="14" viewBox="0 0 18 14">
                    <path d="M9 0c5 0 7 7-1 13l-1-1c3-2 3-4 2-4-5 0-5-8 0-8z" fill="#d8d8d8" />
                  </svg>
                </IconButton>
                <Rule $space={1} />
                <IconButton aria-label="Increase decimal"><DecimalIcon more /></IconButton>
                <IconButton aria-label="Decrease decimal"><DecimalIcon /></IconButton>
              </ToolRow>
            </Lines>
            <GroupLabel>Number</GroupLabel>
          </Group>

          <Group $w={177}>
            <Stack $pad>
              <Command>
                <GridIcon>
                  <path d="M4 1h6v4H4zM4 10h8v5H4z" fill="#d9231f" stroke="#f05a55" />
                  <path d="M1 6h4v4H1z" fill="#1b6fc4" stroke="none" />
                </GridIcon>
                Conditional Formatting <Chevron />
              </Command>
              <Command><GridIcon><BrushOver /></GridIcon>Format as Table <Chevron /></Command>
              <Command><GridIcon><BrushOver /></GridIcon>Cell Styles <Chevron /></Command>
            </Stack>
            <GroupLabel>Styles</GroupLabel>
          </Group>

          <Group $w={97}>
            <Stack $pad>
              <Command>
                <GridIcon>
                  <path d="M6 5h10v5H6z" fill="#1467bd" stroke="#2a9be6" />
                  <path d="M9 8H1M4 5L1 8l3 3" stroke="#2a9be6" strokeWidth="1.500" />
                </GridIcon>
                Insert <Chevron />
              </Command>
              <Command>
                <GridIcon>
                  <path d="M3 5h7v5H3z" fill="#1467bd" stroke="#2a9be6" />
                  <path d="M10 4h7v8h-7z" fill="#2d2d2d" stroke="none" />
                  <path d="M10.500 5l5 6M15.500 5l-5 6" stroke="#ee3a36" strokeWidth="1.400" />
                </GridIcon>
                Delete <Chevron />
              </Command>
              <Command>
                <GridIcon>
                  <path d="M3 0h10M3 0v2M13 0v2" stroke="#2a9be6" />
                  <path d="M5 6h6v4H5z" fill="#1467bd" stroke="#2a9be6" />
                </GridIcon>
                Format <Chevron />
              </Command>
            </Stack>
            <GroupLabel>Cells</GroupLabel>
          </Group>

          <Group $w={155}>
            <GroupBody $gap={4}>
              <Stack $pad>
                <ToolRow $gap={4}><IconButton aria-label="Sum" $w={18}><SumIcon /></IconButton><Chevron /></ToolRow>
                <ToolRow $gap={4}><IconButton aria-label="Fill" $w={18}><FillDownIcon /></IconButton><Chevron /></ToolRow>
                <ToolRow $gap={4}><IconButton aria-label="Clear" $w={18}><EraserIcon /></IconButton><Chevron /></ToolRow>
              </Stack>
              <BigColumn>
                <BigIcon><SortIcon /><Chevron /></BigIcon>
                <BigLabel>Sort &amp;<br />Filter</BigLabel>
              </BigColumn>
              <BigColumn>
                <BigIcon><FindIcon /><Chevron /></BigIcon>
                <BigLabel>Find &amp;<br />Select</BigLabel>
              </BigColumn>
            </GroupBody>
            <GroupLabel>Editing</GroupLabel>
          </Group>

          <Group $w={57}>
            <GroupBody $center>
              <BigColumn $flush>
                <BigIcon><BoltIcon /></BigIcon>
                <BigLabel $dim>Ideas</BigLabel>
              </BigColumn>
            </GroupBody>
            <GroupLabel>Ideas</GroupLabel>
          </Group>

          <Group $w={78} $last>
            <GroupBody $center>
              <BigColumn $flush>
                <BigIcon $end><SensitivityIcon /><Chevron dim /></BigIcon>
                <BigLabel $dim>Sensitivity</BigLabel>
              </BigColumn>
            </GroupBody>
            <GroupLabel>Sensitivity</GroupLabel>
          </Group>
        </Ribbon>

        <FormulaBar>
          <NameBox>
            <NameInput aria-label="Name box" defaultValue="A1" />
            <svg width="8" height="18" viewBox="0 0 8 18" fill="#a9a9a9">
              <path d="M4 0l3.500 6h-7zM4 18l3.500-6h-7z" />
            </svg>
          </NameBox>
          <FormulaTools>
            <svg width="11" height="11" viewBox="0 0 11 11" stroke="#666" strokeWidth="2"><path d="M1 1l9 9M10 1l-9 9" /></svg>
            <svg width="13" height="11" viewBox="0 0 13 11" fill="none" stroke="#666" strokeWidth="2"><path d="M1 6l4 4 7-9" /></svg>
            <Fx>fx</Fx>
          </FormulaTools>
          <FormulaInput
            aria-label="Formula"
            defaultValue="Table with row headings in column A and column headings in rows 5 and 6, 62 and 63, 84 and 85, 122 and 123, 144 and 145, 177 and 178, 199 and 200, 221 and 222, 259 and 260, 281 and 282,"
          />
          <ExpandArrow aria-label="Expand formula bar">
            <svg width="8" height="7" viewBox="0 0 8 7" fill="#bdbdbd"><path d="M0 0h8L4 7z" /></svg>
          </ExpandArrow>
        </FormulaBar>

        <SheetArea>
          <Sheet>
            <colgroup>
              <Col $w={23} />
              <Col $w={109} />
              <Col $w={69} />
              <Col $w={62} />
              {Array.from({ length: 9 }, (_, i) => <Col key={i} $w={59} />)}
              {Array.from({ length: 4 }, (_, i) => <Col key={i} $w={64} />)}
              {Array.from({ length: 4 }, (_, i) => <Col key={i} $w={55} />)}
              <col />
            </colgroup>
            <thead>
              <tr>
                <Corner>
                  <svg width="18" height="17" viewBox="0 0 18 17"><path d="M17 1v15H2z" fill="#6a6a6a" /></svg>
                </Corner>
                {columns.map((c) => (
                  <ColHead key={c} scope="col" $selected={c < "Q"}>{c}</ColHead>
                ))}
                <ColHead $selected={false} />
              </tr>
            </thead>
            <tbody>
              <tr>
                <RowHead $h={16}>2</RowHead>
                <TitleCell colSpan={21}>
                  Households by Total Money Income, Race, and Hispanic Origin of Householder: 1967 to 2018
                </TitleCell>
              </tr>
              <tr>
                <RowHead $h={28}>3</RowHead>
                <NoteCell colSpan={16}>
                  (Income in 2018 CPI-U-RS adjusted dollars. Households as of March of the following year. Beginning with 2010, standard errors were calculated using replicate weights. Before 2010, standard errors were calculated using the generalized variance function. For information on
                  <br />
                  confidentiality protection, sampling error, nonsampling error, and definitions, &lt;https://www2.census.gov/programs-surveys/cps/techdocs/cpsmar19.pdf&gt;.)
                </NoteCell>
                <td colSpan={5} />
              </tr>
              <tr>
                <RowHead $h={14}>4</RowHead>
                <RacesCell colSpan={21}>ALL RACES</RacesCell>
              </tr>
              <tr>
                <RowHead $h={31}>5</RowHead>
                <BlueHead rowSpan={2}>Race and Hispanic<br />origin of householder<br />and year</BlueHead>
                <BlueHead rowSpan={2}>Number<br />(thousands)</BlueHead>
                <BlueHead colSpan={10}>Percent distribution</BlueHead>
                <BlueHead colSpan={2}>Median income<br />(dollars)</BlueHead>
                <BlueHead colSpan={2}>Mean income<br />(dollars)</BlueHead>
                <td colSpan={5} />
              </tr>
              <tr>
                <RowHead $h={45}>6</RowHead>
                <BlueHead>Total</BlueHead>
                <BlueHead>Under<br />$15,000</BlueHead>
                {bands.map(([from, to]) => (
                  <BlueHead key={from}>{from}<br />to<br />{to}</BlueHead>
                ))}
                <BlueHead>$200,000<br />and over</BlueHead>
                <BlueHead>Estimate</BlueHead>
                <BlueHead>Standard<br />error</BlueHead>
                <BlueHead>Estimate</BlueHead>
                <BlueHead>Standard<br />error</BlueHead>
                <td colSpan={5} />
              </tr>
              {data.map(([year, foot, ...values], r) => (
                <tr key={r}>
                  <RowHead $h={15}>{r + 7}</RowHead>
                  <DataCell $left>
                    {year} {foot && <sup>{foot}</sup>}
                  </DataCell>
                  {values.map((v, i) => (
                    <DataCell key={i}>{v}</DataCell>
                  ))}
                  <td colSpan={5} />
                </tr>
              ))}
            </tbody>
          </Sheet>
        </SheetArea>

        <SheetTabs>
          <TabArrows>
            <svg width="7" height="10" viewBox="0 0 7 10" fill="#6d6d6d"><path d="M7 0v10L0 5z" /></svg>
            <svg width="7" height="10" viewBox="0 0 7 10" fill="#6d6d6d"><path d="M0 0v10l7-5z" /></svg>
          </TabArrows>
          <SheetTab>tableA2</SheetTab>
          <AddSheet aria-label="Add sheet">
            <svg width="11" height="11" viewBox="0 0 11 11" stroke="#b5b5b5" strokeWidth="2"><path d="M5.500 0v11M0 5.500h11" /></svg>
          </AddSheet>
        </SheetTabs>

        <StatusBar>
          <svg width="16" height="15" viewBox="0 0 16 15" fill="none" stroke="#fff" strokeWidth="1.500">
            <circle cx="3" cy="3" r="2" fill="#fff" />
            <path d="M3 5v6M0 13.500h8v-2H2M6 1.500h9v2.500M12 2v9c0 2-1 2.500-4 2.500" />
          </svg>
          <ViewButtons>
            <ViewButton aria-label="Normal" $on>
              <svg width="13" height="13" viewBox="0 0 13 13" fill="none" stroke="#fff"><path d="M.5.5h12v12H.5zM4.500 0v13M8.500 0v13M0 4.500h13M0 8.500h13" /></svg>
            </ViewButton>
            <ViewButton aria-label="Page layout">
              <svg width="14" height="13" viewBox="0 0 14 13" fill="none" stroke="#fff"><path d="M.5.5h13v12H.5zM3.500 2.500h7v8h-7zM5 4.500h4M5 6.500h4M5 8.500h4" /></svg>
            </ViewButton>
            <ViewButton aria-label="Page breaks">
              <svg width="14" height="13" viewBox="0 0 14 13" fill="none" stroke="#fff"><path d="M.5.5h13v12H.5zM.5 7.500h8v-7M4.500.5v7" /></svg>
            </ViewButton>
          </ViewButtons>
          <Zoom>
            <svg width="8" height="8" viewBox="0 0 8 8" stroke="#fff" strokeWidth="2"><path d="M0 4h8" /></svg>
            <ZoomSlider type="range" aria-label="Zoom" min={0} max={100} defaultValue={50} />
            <svg width="8" height="8" viewBox="0 0 8 8" stroke="#fff" strokeWidth="2"><path d="M0 4h8M4 0v8" /></svg>
            <ZoomText>100%</ZoomText>
          </Zoom>
        </StatusBar>
      </Window>

      <DockShelf>
        <Dock>
          {dockItems.map((item) => <DockApp key={item.name} item={item} />)}
          <DockRule />
          {dockOffice.map((item) => <DockApp key={item.name} item={item} />)}
          <DockRule />
          <DockButton aria-label="Minimised updater">
            <MiniWindow />
            <MiniBadge><Updater small /></MiniBadge>
          </DockButton>
          <DockButton aria-label="Minimised document"><DocThumb /></DockButton>
          <DockButton aria-label="Trash"><Trash /></DockButton>
        </Dock>
      </DockShelf>
    </Desktop>
  );
}

const GlobalStyle = createGlobalStyle`
  * { box-sizing: border-box; }
  body { margin: 0; font-family: ${ui}; background: #3a1f18; overflow: hidden; }
  button { font-family: inherit; background: none; border: 0; padding: 0; color: inherit; }
  svg { display: block; flex: none; }
`;

const HiddenSvg = styled.svg`
  position: absolute;
`;

const Desktop = styled.div`
  display: flex;
  flex-direction: column;
  height: 100vh;
  color: #fff;
`;

const row = css`
  display: flex;
  align-items: center;
`;

const MenuBar = styled.header`
  ${row}
  height: 22px;
  flex: none;
  padding: 0 23px 0 20px;
  font-size: 14px;
  font-weight: 500;
  background: linear-gradient(90deg, #32465b, #3d4f62 45%, #4a5560);
`;

const MenuList = styled.nav`
  ${row}
  gap: 17px;
  margin-left: 18px;
`;

const MenuItem = styled.button<{ $bold?: boolean }>`
  font-size: 14px;
  font-weight: ${({ $bold }) => ($bold ? 700 : 500)};
`;

const MenuExtras = styled.div`
  ${row}
  gap: 11px;
  margin-left: auto;
`;

const MenuSiri = styled.svg`
  margin-left: 6px;
`;

const Battery = styled.span`
  ${row}
  gap: 5px;
  font-size: 12px;
`;

const Clock = styled.span`
  padding: 0 12px 0 5px;
`;

const Window = styled.main`
  display: flex;
  flex-direction: column;
  flex: 1;
  min-height: 0;
  background: #2d2d2d;
  border-radius: 6px;
  overflow: hidden;
`;

const TitleBar = styled.div`
  display: grid;
  grid-template-columns: 1fr auto 1fr;
  align-items: center;
  height: 33px;
  flex: none;
  padding: 0 9px 0 13px;
  background: linear-gradient(#4b4b4b, #3b3b3b);
  border-top: 1px solid #8a8a8a;
  border-bottom: 1px solid #141414;
`;

const Quick = styled.div`
  ${row}
  gap: 9px;
`;

const Lights = styled.div`
  display: flex;
  gap: 8px;
  margin-right: 16px;
`;

const Light = styled.button<{ $color: string }>`
  width: 12px;
  height: 12px;
  border-radius: 50%;
  background: ${({ $color }) => $color};
`;

const AutoSave = styled.div`
  ${row}
  gap: 6px;
  font-size: 11px;
  font-weight: 500;
  color: #d8d8d8;
`;

const Toggle = styled.button`
  ${row}
  width: 40px;
  height: 14px;
  margin-right: 2px;
  border-radius: 7px;
  background: #1d1d1d;
  font-size: 8px;
  color: #cfcfcf;
  &::before {
    content: "";
    width: 12px;
    height: 12px;
    margin: 0 3px 0 1px;
    border-radius: 50%;
    background: #f5f5f5;
  }
`;

const IconButton = styled.button<{ $w?: number }>`
  ${row}
  justify-content: center;
  ${({ $w }) => $w && `width: ${$w}px;`}
`;

const DocTitle = styled.div`
  ${row}
  gap: 4px;
  font-size: 13px;
  font-weight: 500;
`;

const TitleTools = styled.div`
  ${row}
  justify-content: flex-end;
  gap: 14px;
`;

const TabRow = styled.div`
  ${row}
  gap: 24px;
  height: 33px;
  flex: none;
  padding: 0 10px 0 11px;
`;

const RibbonTab = styled.button<{ $active?: boolean }>`
  height: 25px;
  font-size: 13px;
  font-weight: ${({ $active }) => ($active ? 700 : 500)};
  color: ${({ $active }) => ($active ? "#fff" : "#d9d9d9")};
  border-bottom: 3px solid ${({ $active }) => ($active ? "#e6e6e6" : "transparent")};
`;

const TellMe = styled.button`
  ${row}
  gap: 8px;
  margin-left: -6px;
  font-size: 13px;
  font-weight: 500;
  color: #d9d9d9;
`;

const TabActions = styled.div`
  display: flex;
  gap: 10px;
  margin-left: auto;
`;

const GreyButton = styled.button`
  ${row}
  gap: 5px;
  height: 24px;
  padding: 0 8px;
  border-radius: 3px;
  background: #636363;
  font-size: 12px;
  font-weight: 600;
  color: #f0f0f0;
`;

const Ribbon = styled.section`
  display: flex;
  height: 88px;
  flex: none;
  padding: 1px 0 3px;
`;

const Group = styled.div<{ $w: number; $last?: boolean }>`
  display: flex;
  flex-direction: column;
  justify-content: space-between;
  flex: none;
  width: ${({ $w }) => $w}px;
  padding-left: 10px;
  background: linear-gradient(#4e4e4e, #4e4e4e) right top / ${({ $last }) => ($last ? 0 : 1)}px 79px no-repeat;
`;

const GroupLabel = styled.span`
  margin-left: -10px;
  text-align: center;
  font-size: 10px;
  line-height: 12px;
  color: #a6a6a6;
`;

const GroupBody = styled.div<{ $gap?: number; $center?: boolean }>`
  display: flex;
  gap: ${({ $gap }) => $gap || 0}px;
  ${({ $center }) => $center && "justify-content: center; margin-left: -10px;"}
`;

const BigColumn = styled.div<{ $flush?: boolean }>`
  display: flex;
  flex-direction: column;
  align-items: center;
  padding: 4px 0 0 ${({ $flush }) => ($flush ? 0 : 4)}px;
`;

const BigIcon = styled.button<{ $end?: boolean }>`
  ${row}
  gap: 4px;
  height: 32px;
  ${({ $end }) => $end && "align-self: flex-end;"}
`;

const BigLabel = styled.span<{ $dim?: boolean }>`
  margin-top: 3px;
  text-align: center;
  font-size: 11px;
  font-weight: 500;
  line-height: 12px;
  color: ${({ $dim }) => ($dim ? "#7d7d7d" : "#ececec")};
`;

const Stack = styled.div<{ $pad?: boolean }>`
  display: grid;
  grid-template-rows: repeat(3, 22px);
  justify-items: start;
  padding-left: ${({ $pad }) => ($pad ? 3 : 0)}px;
`;

const Lines = styled.div`
  display: grid;
  grid-template-rows: 34px 28px;
`;

const ToolRow = styled.div<{ $gap?: number; $inset?: boolean }>`
  ${row}
  gap: ${({ $gap }) => $gap || 5}px;
  ${({ $inset }) => $inset && "padding-left: 5px;"}
`;

const SelectWrap = styled.label<{ $w: number }>`
  ${row}
  width: ${({ $w }) => $w}px;
  height: 24px;
  padding-right: 3px;
  border: 1px solid #444;
  border-radius: 2px;
  background: #363636;
`;

const Picker = styled.select`
  flex: 1;
  min-width: 0;
  appearance: none;
  border: 0;
  padding: 0 0 0 5px;
  background: none;
  color: #f0f0f0;
  font: 500 12px ${ui};
`;

const SizeButtons = styled.div`
  display: flex;
  gap: 9px;
  padding-left: 5px;
`;

const Letter = styled.button<{ $bold?: boolean; $italic?: boolean; $underline?: boolean }>`
  width: 16px;
  font-size: 13px;
  color: #d8d8d8;
  ${({ $bold }) => $bold && "font-weight: 700;"}
  ${({ $italic }) => $italic && `font-family: "Liberation Serif", serif; font-style: italic;`}
  ${({ $underline }) => $underline && "text-decoration: underline;"}
`;

const Symbol = styled.button`
  font-size: 18px;
  font-weight: 300;
  color: #d8d8d8;
`;

const Rule = styled.i<{ $space: number }>`
  width: 1px;
  height: 18px;
  margin: 0 ${({ $space }) => $space}px;
  background: #4e4e4e;
`;

const AlignButton = styled.button<{ $on?: boolean }>`
  ${row}
  justify-content: center;
  width: 22px;
  height: 20px;
  border-radius: 2px;
  background: ${({ $on }) => ($on ? "#494949" : "transparent")};
`;

const Command = styled.button`
  ${row}
  gap: 5px;
  font-size: 11px;
  font-weight: 500;
  color: #ececec;
`;

const FormulaBar = styled.div`
  display: flex;
  align-items: center;
  height: 30px;
  flex: none;
  background: #262626;
  border-top: 2px solid #0d0d0d;
  border-bottom: 2px solid #c8c8c8;
`;

const NameBox = styled.div`
  ${row}
  justify-content: space-between;
  width: 87px;
  height: 100%;
  padding: 0 5px 0 10px;
  border-right: 2px solid #1c1c1c;
`;

const NameInput = styled.input`
  width: 50px;
  border: 0;
  padding: 0;
  background: none;
  color: #bdbdbd;
  font: 12px ${lightCellFont};
`;

const FormulaTools = styled.div`
  ${row}
  gap: 18px;
  width: 94px;
  padding-left: 13px;
`;

const Fx = styled.span`
  font: italic 18px "Liberation Serif", serif;
  color: #b8b8b8;
`;

const FormulaInput = styled.input`
  flex: 1;
  min-width: 0;
  height: 20px;
  border: 0;
  padding: 0 7px;
  background: #363636;
  color: #fff;
  font: 12px ${lightCellFont};
`;

const ExpandArrow = styled.button`
  ${row}
  justify-content: center;
  width: 16px;
`;

const SheetArea = styled.div`
  flex: 1;
  min-height: 0;
  overflow: hidden;
  background: #fff;
`;

const Sheet = styled.table`
  table-layout: fixed;
  width: 100%;
  border-collapse: separate;
  border-spacing: 0;
  font-family: ${cellFont};
  font-size: 9px;
  font-weight: 500;
  color: #000;
  th, td { padding: 0; }
`;

const Col = styled.col<{ $w: number }>`
  width: ${({ $w }) => $w}px;
`;

const Corner = styled.th`
  height: 22px;
  background: #161616;
  border-right: 1px solid #8c8c8c;
  border-bottom: 1px solid #8c8c8c;
  svg { margin-left: auto; }
`;

const ColHead = styled.th<{ $selected: boolean }>`
  font-size: 10px;
  line-height: 14px;
  color: #fff;
  background: ${({ $selected }) => ($selected ? "#565656" : "#161616")};
  border-bottom: ${({ $selected }) => ($selected ? "2px solid #107c41" : "1px solid #8c8c8c")};
  border-right: 1px solid ${({ $selected }) => ($selected ? "#565656" : "#6b6b6b")};
`;

const RowHead = styled.th<{ $h: number }>`
  height: ${({ $h }) => $h}px;
  font-size: 10px;
  line-height: 13px;
  vertical-align: bottom;
  color: #fff;
  background: #161616;
  border-right: 1px solid #8c8c8c;
  border-bottom: 1px solid #6b6b6b;
`;

const TitleCell = styled.th`
  && { padding-left: 2px; }
  text-align: left;
  font-size: 12px;
  line-height: 14px;
`;

const NoteCell = styled.td`
  && { padding-left: 2px; }
  line-height: 12px;
  font: 8px/12px ${lightCellFont};
  white-space: nowrap;
`;

const RacesCell = styled.th`
  && { padding-left: 2px; }
  text-align: left;
  font-size: 9px;
  line-height: 12px;
`;

const BlueHead = styled.th`
  font-size: 9px;
  line-height: 15px;
  white-space: nowrap;
  background: #8fc8ff;
  border-right: 1px solid #a9bfd6;
  border-bottom: 1px solid #a9bfd6;
`;

const DataCell = styled.td<{ $left?: boolean }>`
  && { padding: 0 2px; }
  line-height: 12px;
  text-align: ${({ $left }) => ($left ? "left" : "right")};
  border-right: 1px solid #9cb9dc;
  border-bottom: 1px solid #9cb9dc;
  sup { font-size: 7px; font-weight: 700; line-height: 0; }
`;

const SheetTabs = styled.div`
  display: flex;
  height: 27px;
  flex: none;
  background: #323232;
  border-bottom: 2px solid #0c0c0c;
`;

const TabArrows = styled.div`
  ${row}
  gap: 16px;
  width: 61px;
  padding-left: 15px;
`;

const SheetTab = styled.button`
  width: 78px;
  height: 22px;
  background: #fff;
  color: #1a9158;
  font-size: 12px;
  font-weight: 700;
`;

const AddSheet = styled.button`
  ${row}
  justify-content: center;
  width: 39px;
  height: 22px;
  border-right: 1px solid #5a5a5a;
`;

const StatusBar = styled.footer`
  ${row}
  height: 22px;
  flex: none;
  padding: 0 24px;
  background: linear-gradient(#494949, #3a3a3a);
`;

const ViewButtons = styled.div`
  display: flex;
  height: 100%;
  margin-left: auto;
`;

const ViewButton = styled.button<{ $on?: boolean }>`
  ${row}
  justify-content: center;
  width: 36px;
  background: ${({ $on }) => ($on ? "#5c5c5c" : "transparent")};
`;

const Zoom = styled.div`
  ${row}
  gap: 8px;
  padding-left: 8px;
`;

const ZoomSlider = styled.input`
  appearance: none;
  width: 98px;
  height: 4px;
  margin: 0;
  border-radius: 2px;
  background: #757575;
  &::-webkit-slider-thumb {
    appearance: none;
    width: 11px;
    height: 11px;
    border-radius: 50%;
    background: #d0d0d0;
  }
`;

const ZoomText = styled.span`
  margin-left: 8px;
  font-size: 12px;
  color: #e0e0e0;
`;

const DockShelf = styled.div`
  display: flex;
  justify-content: center;
  flex: none;
  padding: 1px 0 0;
  background: linear-gradient(90deg, #3b211b, #4a2a20 50%, #5e3a12 96%, #a8701c);
`;

const Dock = styled.div`
  display: flex;
  height: 47px;
  padding: 0 2px;
  border: 1px solid #6b4a3c;
  border-bottom: 0;
  border-radius: 4px 4px 0 0;
  background: linear-gradient(90deg, #452c25, #5e3829 12%, #7a402b 20%, #6e3a1a 33%, #8a430e 50%, #9a4b10 75%, #7c3d0c);
`;

const DockButton = styled.button`
  position: relative;
  display: flex;
  justify-content: center;
  align-items: center;
  width: 38px;
  height: 42px;
`;

const Badge = styled.span`
  position: absolute;
  top: 3px;
  right: 1px;
  min-width: 13px;
  padding: 0 2px;
  border-radius: 7px;
  background: #f0141e;
  font-size: 8px;
  line-height: 13px;
  text-align: center;
`;

const RunningDot = styled.i`
  position: absolute;
  left: 17px;
  bottom: -3px;
  width: 4px;
  height: 4px;
  border-radius: 50%;
  background: #ecc0a0;
`;

const DockRule = styled.i`
  width: 1px;
  height: 34px;
  margin: 5px 9px;
  background: #b0713e;
`;

const MiniWindow = styled.span`
  width: 33px;
  height: 8px;
  border-top: 2px solid #5a5a5a;
  background: #2c2c2e;
`;

const MiniBadge = styled.span`
  position: absolute;
  right: 4px;
  bottom: 1px;
`;
